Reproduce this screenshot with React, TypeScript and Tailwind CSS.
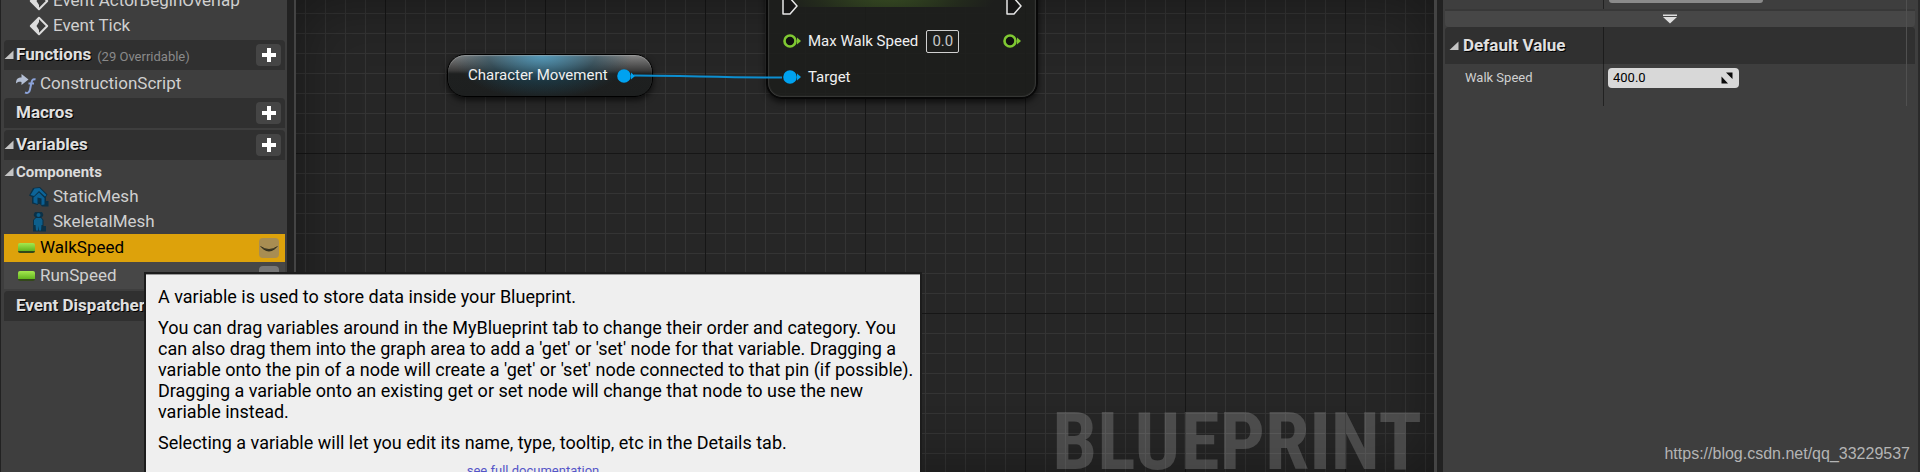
import type { ReactNode } from 'react'

type HeaderProps = {
  title: string
  note?: string
  expandable?: boolean
  addLabel?: string
}

const TOOLTIP_PARAGRAPHS = [
  'A variable is used to store data inside your Blueprint.',
  "You can drag variables around in the MyBlueprint tab to change their order and category. You can also drag them into the graph area to add a 'get' or 'set' node for that variable. Dragging a variable onto the pin of a node will create a 'get' or 'set' node connected to that pin (if possible). Dragging a variable onto an existing get or set node will change that node to use the new variable instead.",
  'Selecting a variable will let you edit its name, type, tooltip, etc in the Details tab.',
]

function ExpandArrow() {
  return (
    <svg width="10" height="10" viewBox="0 0 10 10" className="shrink-0" aria-hidden="true">
      <path d="M9.5 0.5V9H0.5Z" fill="#c4c4c4" />
    </svg>
  )
}

function EventIcon() {
  return (
    <svg width="20" height="20" viewBox="0 0 20 20" className="shrink-0" aria-hidden="true">
      <path d="M10 1.8 18.2 10 10 18.2 1.8 10Z" fill="#3a3a3a" stroke="#dcdcdc" strokeWidth="2" strokeLinejoin="round" />
      <path d="M10 2 2 10l8 8v-4L7.500 10 10 6Z" fill="#dcdcdc" />
    </svg>
  )
}

function ConstructionIcon() {
  return (
    <svg width="20" height="20" viewBox="0 0 20 20" className="shrink-0" aria-hidden="true">
      <path d="M0 9.500C0 5 2 3.500 5.500 3.500V0L12.500 5.500 5.500 11V8C3 7.500 1.500 8 0 9.500Z" fill="#b4bfd4" />
      <path d="M19.500 5.500C17 4.500 16 6 15.500 8.500L14 15.500C13.500 18.500 11.500 19.500 9 18.500M12.500 9.500H18" fill="none" stroke="#8ba2d8" strokeWidth="2" />
    </svg>
  )
}

function StaticMeshIcon() {
  return (
    <svg width="20" height="20" viewBox="0 0 20 20" className="shrink-0" aria-hidden="true">
      <path d="M4 1 11 0 18.500 7.500 17 10V14H19.500V19.500H13L11 17H9V18L3 16.500V10L0 8.500Z" fill="#0b3147" />
      <path d="M5.500 1.500 10.500 1 17.500 8 16 9.500 10 4 5 9 1.500 8Z" fill="#0d6498" />
      <path d="M4.500 10.500 10 5.500 15.500 11V17.500L12.500 18V11.500L8.500 10.500V17L4.500 15.500Z" fill="#0a5f93" />
    </svg>
  )
}

function SkeletalMeshIcon() {
  return (
    <svg width="20" height="20" viewBox="0 0 20 20" className="shrink-0" aria-hidden="true">
      <path d="M9.500 0A3 3 0 0 1 12.500 5.500L14.500 8V14H17V19.500H4V8L6.500 5.500A3 3 0 0 1 9.500 0Z" fill="#0b3147" />
      <circle cx="9.500" cy="3" r="2" fill="#0d5f8c" />
      <path d="M7 6H12L13.500 8V13H12.500L12 18.500H10L9.500 14 9 18.500H7L6.500 13H5V8Z" fill="#0d5f8c" />
    </svg>
  )
}

function FloatPill() {
  return <span className="h-2.5 w-[17px] shrink-0 rounded-xs border-b-2 border-[#33481a] bg-linear-to-b from-[#a4e84e] to-[#62b51c]" />
}

function EyeIcon() {
  return (
    <svg width="20" height="20" viewBox="0 0 20 20" aria-hidden="true">
      <path d="M2 9Q10 14 18 9L15.500 11.500Q10 15.500 4.500 11.500Z" fill="#33301f" />
      <path d="M1.500 8.500Q10 14.500 18.500 8.500" fill="none" stroke="#33301f" strokeWidth="1" />
    </svg>
  )
}

function SectionHeader({ title, note, expandable, addLabel }: HeaderProps) {
  return (
    <div className="flex h-[30px] items-center rounded-t bg-[#303030] pr-1">
      <span className="flex w-3 shrink-0 items-center">{expandable && <ExpandArrow />}</span>
      <h2 className="text-[17px] font-bold whitespace-nowrap text-[#e0e0e0] [text-shadow:1px_1px_0_#000]">{title}</h2>
      {note && <span className="pt-1 pl-1.5 text-[13px] text-[#8a8a8a]">{note}</span>}
      {addLabel && (
        <button aria-label={addLabel} className="ml-auto flex h-[22px] w-[25px] items-center justify-center rounded-sm bg-[#454545]">
          <svg width="14" height="14" viewBox="0 0 14 14" aria-hidden="true">
            <path d="M5 0h4v5h5v4H9v5H5V9H0V5h5Z" fill="#fff" />
          </svg>
        </button>
      )}
    </div>
  )
}

function TreeRow({ icon, label }: { icon: ReactNode; label: string }) {
  return (
    <div className="flex h-[25px] shrink-0 items-center gap-1 pl-[25px]">
      {icon}
      <span>{label}</span>
    </div>
  )
}

function VariableRow({ label, selected }: { label: string; selected?: boolean }) {
  return (
    <div className={`flex items-center pr-1.5 pl-3.5 ${selected ? 'h-7 bg-[#dda20b] text-black' : 'h-[27px] bg-[#474747]'}`}>
      <FloatPill />
      <span className="pl-[5px]">{label}</span>
      <button
        aria-label={`Toggle ${label} visibility`}
        className={`ml-auto size-5 rounded-sm ${selected ? 'bg-[#a88d52]' : 'bg-[#777]'}`}
      >
        <EyeIcon />
      </button>
    </div>
  )
}

function MyBlueprintPanel() {
  return (
    <aside className="flex w-[296px] shrink-0 border-r-2 border-[#444] bg-[#222]">
      <div className="w-[287px] overflow-hidden border-l border-[#222] bg-[#3e3e3e] pr-0.5 pl-[3px] text-[17px] text-[#d0d0d0]">
        <div className="-mt-3 pb-0.5">
          <TreeRow icon={<EventIcon />} label="Event ActorBeginOverlap" />
          <TreeRow icon={<EventIcon />} label="Event Tick" />
        </div>
        <SectionHeader title="Functions" note="(29 Overridable)" expandable addLabel="Add function" />
        <div className="flex h-7 items-center gap-1 pl-3">
          <ConstructionIcon />
          <span>ConstructionScript</span>
        </div>
        <SectionHeader title="Macros" addLabel="Add macro" />
        <div className="h-0.5" />
        <SectionHeader title="Variables" expandable addLabel="Add variable" />
        <div className="flex h-6 items-center">
          <ExpandArrow />
          <h3 className="pl-0.5 text-[15px] font-bold text-[#dcdcdc]">Components</h3>
        </div>
        <TreeRow icon={<StaticMeshIcon />} label="StaticMesh" />
        <TreeRow icon={<SkeletalMeshIcon />} label="SkeletalMesh" />
        <VariableRow label="WalkSpeed" selected />
        <VariableRow label="RunSpeed" />
        <div className="h-0.5" />
        <SectionHeader title="Event Dispatchers" addLabel="Add event dispatcher" />
      </div>
    </aside>
  )
}

function DataPin({ color, filled }: { color: string; filled?: boolean }) {
  return (
    <svg width="20" height="16" viewBox="0 0 20 16" className="shrink-0" aria-hidden="true">
      <circle cx="8" cy="8" r="5.500" fill={filled ? color : '#101010'} stroke={color} strokeWidth="2.600" />
      <path d="M15 4.500 19 8 15 11.500Z" fill={color} />
    </svg>
  )
}

function ExecPin() {
  return (
    <svg width="16" height="18" viewBox="0 0 16 18" className="shrink-0" aria-hidden="true">
      <path d="M1 1H8L15 9 8 17H1Z" fill="#151515" stroke="#e6e6e6" strokeWidth="1.500" strokeLinejoin="round" />
    </svg>
  )
}

function GetterNode() {
  return (
    <div className="absolute top-[54px] left-[151px] flex h-[43px] w-[206px] items-center justify-between rounded-[18px] border border-black bg-[radial-gradient(ellipse_90px_44px_at_46%_0,#4aa0c8cc,#1c4a5e80_60%,transparent),linear-gradient(#858585,#3a3a3a_38%,#1e2020_46%,#1d1f1f)] pr-4 pl-5 shadow-[0_3px_6px_#000a,inset_0_1px_1px_#aaa8]">
      <span className="text-[15px] whitespace-nowrap text-[#f0f0f0]">Character Movement</span>
      <DataPin color="#00a2f0" filled />
    </div>
  )
}

function SetterNode() {
  return (
    <div className="absolute -top-10 left-[470px] w-[272px] rounded-2xl border-2 border-[#080808] bg-[#1d1e1c]/90 px-3.5 pb-2 shadow-[0_3px_6px_#000a,inset_0_0_2px_#777]">
      <div className="-mx-3.5 h-[45px] rounded-t-2xl bg-[radial-gradient(ellipse_110px_60px_at_45%_50%,#3a5222,#232a1c_70%,#1d1e1c00)]" />
      <div className="-mt-3 flex h-[22px] items-center justify-between">
        <ExecPin />
        <ExecPin />
      </div>
      <div className="mt-3 flex h-6 items-center">
        <DataPin color="#7fc832" />
        <label htmlFor="max-walk-speed" className="pl-1.5 text-[15px] whitespace-nowrap text-[#f0f0f0]">
          Max Walk Speed
        </label>
        <input
          id="max-walk-speed"
          defaultValue="0.0"
          className="ml-2 h-[23px] w-[33px] rounded-xs border border-[#d0d0d0] text-center text-[15px] text-[#c8c8c8]"
        />
        <span className="ml-auto flex">
          <DataPin color="#7fc832" />
        </span>
      </div>
      <div className="mt-3 flex h-6 items-center">
        <DataPin color="#00a2f0" filled />
        <span className="pl-1.5 text-[15px] text-[#f0f0f0]">Target</span>
      </div>
    </div>
  )
}

function GraphCanvas() {
  return (
    <main className="relative min-w-0 flex-1 overflow-hidden bg-[#262626]">
      <div className="absolute inset-0 bg-[linear-gradient(to_right,#161616_1px,transparent_1px),linear-gradient(#161616_1px,transparent_1px),linear-gradient(to_right,#343434_1px,transparent_1px),linear-gradient(#343434_1px,transparent_1px)] bg-[size:160px_160px,160px_160px,20px_20px,20px_20px] bg-[position:89px_0,0_153px,9px_0,0_13px]" />
      <div className="absolute inset-0 shadow-[inset_0_0_60px_#0006]" />
      <SetterNode />
      <GetterNode />
      <svg width="156" height="8" viewBox="0 0 156 8" className="absolute top-[73px] left-[336px]" aria-hidden="true">
        <path d="M2 2.500C50 2.500 90 4.500 150 4.500" fill="none" stroke="#0c8ed0" strokeWidth="2" />
      </svg>
      <div className="absolute right-3 bottom-0 font-['Roboto_Condensed','Liberation_Sans_Narrow',Roboto,sans-serif] text-[80px] leading-[60px] font-bold text-white/18">
        BLUEPRINT
      </div>
    </main>
  )
}

function DetailsPanel() {
  return (
    <aside className="flex w-[486px] shrink-0 border-l-3 border-[#444] bg-[#222] pl-1.5">
      <div className="relative flex-1 border-r-2 border-[#2a2a2a] bg-[#3e3e3e] pr-[3px] pl-0.5">
        <div className="flex h-[11px] border-b-2 border-[#383838]">
          <div className="w-[159px] border-r border-[#222]" />
          <div className="ml-[5px] h-[3px] w-[154px] rounded-b-sm bg-[#8a8a8a]" />
        </div>
        <button aria-label="Show advanced" className="flex h-4 w-full items-center justify-center rounded-b bg-[#474747] pr-5">
          <svg width="14" height="10" viewBox="0 0 14 10" aria-hidden="true">
            <path d="M0 0.500H14V2H0ZM0 3H14L7 9.500Z" fill="#dedede" />
          </svg>
        </button>
        <div className="flex h-[37px] rounded-t bg-[#303030]">
          <div className="flex w-[159px] items-center border-r border-[#1c1c1c] pl-1">
            <ExpandArrow />
            <h2 className="pl-1 text-[17px] font-bold text-[#e0e0e0] [text-shadow:1px_1px_0_#000]">Default Value</h2>
          </div>
        </div>
        <div className="flex h-[42px]">
          <label htmlFor="walk-speed" className="w-[159px] border-r border-[#222] pt-1 pl-5 text-[13px] text-[#d0d0d0]">
            Walk Speed
          </label>
          <div className="mt-1 ml-1 flex h-5 w-[131px] items-center rounded bg-[#d8d8d8] pr-1.5 pl-[5px]">
            <input id="walk-speed" defaultValue="400.0" className="w-full min-w-0 text-[13px] text-black" />
            <svg width="12" height="12" viewBox="0 0 12 12" className="shrink-0" aria-hidden="true">
              <path d="M5 0.500H11.500V7ZM0.500 4.500 7 11.500H0.500Z" fill="#0a0a0a" />
            </svg>
          </div>
        </div>
        <div className="absolute top-0 right-[11px] h-[106px] w-px bg-[#505050]" />
      </div>
    </aside>
  )
}

function VariableTooltip() {
  return (
    <div
      role="tooltip"
      className="absolute top-[272px] left-[144px] w-[778px] border-2 border-[#1c1c1c] bg-[#efefef] pt-3 pr-0.5 pl-3 text-[18px] leading-[21px] text-black shadow-[inset_0_1px_0_#999]"
    >
      {TOOLTIP_PARAGRAPHS.map((text) => (
        <p key={text} className="mb-2.5">
          {text}
        </p>
      ))}
      <a href="#documentation" className="block pr-2.5 text-center text-[13px] leading-4 text-[#5555c8]">
        see full documentation
      </a>
    </div>
  )
}

export default function App() {
  return (
    <div className="relative flex h-screen overflow-hidden bg-[#222] font-[Roboto,sans-serif]">
      <MyBlueprintPanel />
      <GraphCanvas />
      <DetailsPanel />
      <VariableTooltip />
      <p className="absolute right-2.5 bottom-1.5 font-['Liberation_Sans',sans-serif] text-base text-[#b4b4b4]">
        https://blog.csdn.net/qq_33229537
      </p>
    </div>
  )
}
